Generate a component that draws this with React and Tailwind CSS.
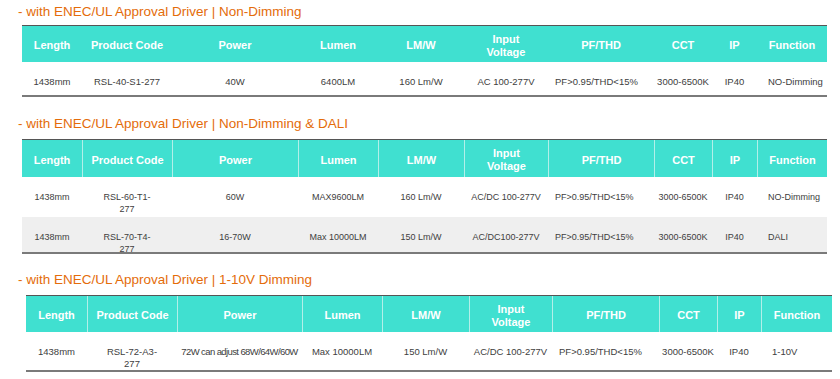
import React from "react";

const cols = [60, 90, 126, 80, 86, 84, 106, 58, 45, 70];

const cols3 = [61, 90, 125, 80, 87, 83, 107, 58, 44, 71];

const headers = ["Length", "Product Code", "Power", "Lumen", "LM/W", "Input\nVoltage", "PF/THD", "CCT", "IP", "Function"];

const tables = [
  {
    title: "- with ENEC/UL Approval Driver | Non-Dimming",
    widths: cols,
    dividers: false,
    left: "ml-[22px]",
    headH: "h-[37px]",
    size: "text-[9.5px]",
    rows: [
      {
        h: "h-[35px]",
        bg: "bg-white",
        cells: ["1438mm", "RSL-40-S1-277", "40W", "6400LM", "160 Lm/W", "AC 100-277V", "PF>0.95/THD<15%", "3000-6500K", "IP40", "NO-Dimming"],
      },
    ],
  },
  {
    title: "- with ENEC/UL Approval Driver | Non-Dimming & DALI",
    widths: cols,
    dividers: true,
    left: "ml-[22px]",
    headH: "h-[38px]",
    size: "text-[9px]",
    rows: [
      {
        h: "h-[40px]",
        bg: "bg-white",
        cells: ["1438mm", ["RSL-60-T1-", "277"], "60W", "MAX9600LM", "160 Lm/W", "AC/DC 100-277V", "PF>0.95/THD<15%", "3000-6500K", "IP40", "NO-Dimming"],
      },
      {
        h: "h-[37px]",
        bg: "bg-[#efefef]",
        cells: ["1438mm", ["RSL-70-T4-", "277"], "16-70W", "Max 10000LM", "150 Lm/W", "AC/DC100-277V", "PF>0.95/THD<15%", "3000-6500K", "IP40", "DALI"],
      },
    ],
  },
  {
    title: "- with ENEC/UL Approval Driver | 1-10V Dimming",
    widths: cols3,
    dividers: true,
    left: "ml-[26px]",
    headH: "h-[37px]",
    size: "text-[9.5px]",
    rows: [
      {
        h: "h-[40px]",
        bg: "bg-white",
        cells: ["1438mm", ["RSL-72-A3-", "277"], "72W can adjust 68W/64W/60W", "Max 10000LM", "150 Lm/W", "AC/DC 100-277V", "PF>0.95/THD<15%", "3000-6500K", "IP40", "1-10V"],
      },
    ],
  },
];

function cellAlign(i) {
  if (i === 6) return "text-left pl-[7px]";
  if (i === 9) return "text-left pl-[11px]";
  return "text-center";
}

function SpecTable({ t }) {
  const total = t.widths.reduce((a, b) => a + b, 0);
  return (
    <div className={t.left} style={{ width: total }}>
      <div className={`flex bg-[#40e0d0] border-t border-[#555555] ${t.headH}`}>
        {headers.map((h, i) => (
          <div
            key={h}
            style={{ width: t.widths[i] }}
            className={`flex items-center justify-center pt-[3px] text-center text-white font-bold text-[11px] leading-[13px] whitespace-pre shrink-0 ${
              t.dividers && i > 0 ? "border-l border-[#b3efe9]" : ""
            }`}
          >
            {h}
          </div>
        ))}
      </div>
      {t.rows.map((r, ri) => (
        <div
          key={ri}
          className={`flex ${r.h} ${r.bg} ${ri === t.rows.length - 1 ? "border-b-2 border-[#7a7a7a]" : ""}`}
        >
          {r.cells.map((c, i) => (
            <div
              key={i}
              style={{ width: t.widths[i] }}
              className={`shrink-0 pt-[14px] leading-[12px] ${t.size} text-[#404040] whitespace-nowrap ${cellAlign(i)} ${
                i === 2 && c.length > 20 ? "tracking-[-0.6px]" : ""
              }`}
            >
              {Array.isArray(c) ? (
                <>
                  {c[0]}
                  <br />
                  {c[1]}
                </>
              ) : (
                c
              )}
            </div>
          ))}
        </div>
      ))}
    </div>
  );
}

export default function App() {
  return (
    <div className="w-[840px] h-[379px] overflow-hidden bg-white font-['Liberation_Sans',Arial,sans-serif]">
      <h2 className="pl-[18px] pt-[3px] h-[25px] text-[13.5px] leading-[17px] text-[#e46c0a]">{tables[0].title}</h2>
      <SpecTable t={tables[0]} />
      <h2 className="pl-[18px] pt-[18px] h-[42px] text-[13.5px] leading-[17px] text-[#e46c0a]">{tables[1].title}</h2>
      <SpecTable t={tables[1]} />
      <h2 className="pl-[18px] pt-[17px] h-[41px] text-[13.5px] leading-[17px] text-[#e46c0a]">{tables[2].title}</h2>
      <SpecTable t={tables[2]} />
    </div>
  );
}
